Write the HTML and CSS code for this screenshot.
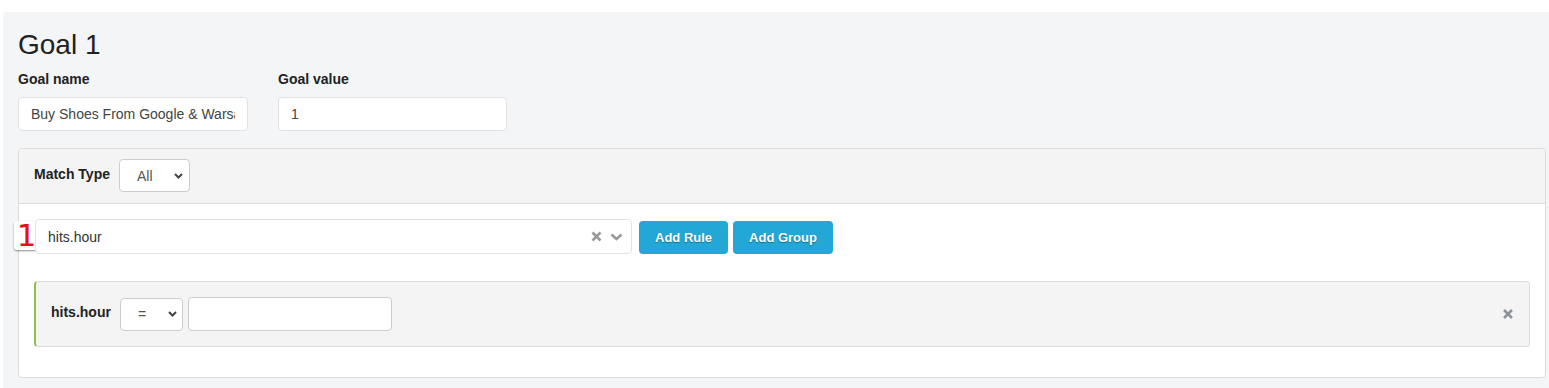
FILE: index.html
```html
<!DOCTYPE html>
<html>
    <head>
        <title>Goal editor</title>
        <link rel="stylesheet" href="styles.css">
    </head>
    <body>
        <div class="goal">
            <h1 class="goal-title">Goal 1</h1>

            <div class="goal-fields">
                <div class="field">
                    <label for="goalName">Goal name</label>
                    <input id="goalName" class="text-input name-input" type="text" value="Buy Shoes From Google &amp; Warsaw">
                </div>
                <div class="field">
                    <label for="goalValue">Goal value</label>
                    <input id="goalValue" class="text-input value-input" type="text" value="1">
                </div>
            </div>

            <div class="builder">
                <div class="builder-head">
                    <span class="head-label">Match Type</span>
                    <div class="fake-select match-select">
                        <span>All</span>
                        <svg width="9" height="6" viewBox="0 0 9 6"><polyline points="1,1 4.5,4.5 8,1" fill="none" stroke="#444" stroke-width="2"/></svg>
                    </div>
                </div>

                <div class="builder-body">
                    <div class="rule-row">
                        <span class="badge">1</span>
                        <div class="combo">
                            <span class="combo-text">hits.hour</span>
                            <svg class="combo-clear" width="11" height="11" viewBox="0 0 11 11"><path d="M1.5 1.5 L9.5 9.5 M9.5 1.5 L1.5 9.5" stroke="#999" stroke-width="2.6"/></svg>
                            <svg class="combo-arrow" width="13" height="8" viewBox="0 0 13 8"><polyline points="1.5,1.5 6.5,6 11.5,1.5" fill="none" stroke="#999" stroke-width="2.6"/></svg>
                        </div>
                        <button type="button" class="btn">Add Rule</button>
                        <button type="button" class="btn">Add Group</button>
                    </div>

                    <div class="rule">
                        <span class="rule-label">hits.hour</span>
                        <div class="fake-select op-select">
                            <span>=</span>
                            <svg width="9" height="6" viewBox="0 0 9 6"><polyline points="1,1 4.5,4.5 8,1" fill="none" stroke="#444" stroke-width="2"/></svg>
                        </div>
                        <input class="text-input rule-input" type="text" value="">
                        <svg class="rule-remove" width="12" height="12" viewBox="0 0 12 12"><path d="M2 2 L10 10 M10 2 L2 10" stroke="#8a929c" stroke-width="2.6"/></svg>
                    </div>
                </div>
            </div>
        </div>
    </body>
</html>
```

FILE: styles.css
```css
html {
    background: #fff;
}
body {
    margin: 0;
    overflow: hidden;
    font-family: "Liberation Sans", Arial, sans-serif;
    color: #333;
}
.goal {
    margin: 12px -30px 0 3px;
    padding: 15px;
    background: #f4f5f7;
    border-radius: 4px;
}
.goal-title {
    margin: 2px 0 0;
    font-size: 28px;
    line-height: 31px;
    font-weight: normal;
    color: #222;
}
.goal-fields {
    display: flex;
    gap: 30px;
    margin-top: 9px;
}
.field label {
    display: block;
    font-size: 14px;
    line-height: 20px;
    font-weight: bold;
    color: #222;
    margin-bottom: 8px;
}
.text-input {
    box-sizing: border-box;
    height: 34px;
    padding: 0 12px;
    border: 1px solid #e0e2e6;
    border-radius: 4px;
    background: #fff;
    font-family: "Liberation Sans", Arial, sans-serif;
    font-size: 14px;
    color: #444;
    outline: none;
}
.name-input {
    width: 230px;
}
.value-input {
    width: 229px;
}
.builder {
    margin: 17px 18px 0 0;
    border: 1px solid #dcdcdc;
    border-radius: 4px;
    background: #fff;
}
.builder-head {
    display: flex;
    align-items: center;
    padding: 10px 15px 11px;
    background: #f4f4f4;
    border-bottom: 1px solid #dcdcdc;
    border-radius: 4px 4px 0 0;
}
.head-label, .rule-label {
    font-size: 14px;
    line-height: 20px;
    font-weight: bold;
    color: #222;
    margin-bottom: 4px;
}
.head-label {
    margin-right: 9px;
}
.fake-select {
    box-sizing: border-box;
    display: flex;
    align-items: center;
    justify-content: space-between;
    height: 33px;
    border: 1px solid #ccc;
    border-radius: 4px;
    background: #fff;
    font-size: 14px;
    color: #555;
}
.match-select {
    width: 71px;
    padding: 0 6px 0 17px;
}
.op-select {
    width: 63px;
    padding: 0 5px 0 17px;
}
.builder-body {
    padding: 15px 15px 30px;
}
.rule-row {
    position: relative;
    display: flex;
    align-items: flex-end;
}
.badge {
    position: absolute;
    left: -20px;
    top: 2px;
    padding: 0 3px;
    background: #fff;
    border-radius: 3px;
    box-shadow: 0 1px 2px rgba(0, 0, 0, 0.45);
    font-family: "DejaVu Sans", sans-serif;
    font-size: 30px;
    line-height: 29px;
    color: #e3111b;
    -webkit-text-stroke: 0.2px #e3111b;
}
.combo {
    position: relative;
    box-sizing: border-box;
    display: flex;
    align-items: center;
    width: 597px;
    height: 35px;
    margin: 0 7px 0 1px;
    padding: 0 8px 0 12px;
    border: 1px solid #e2e2e2;
    border-radius: 4px;
    background: #fff;
    font-size: 14px;
    color: #333;
}
.combo-text {
    flex: 1;
}
.combo-clear {
    margin-right: 8px;
}
.btn {
    height: 33px;
    padding: 0 16px;
    margin-right: 5px;
    border: none;
    border-radius: 4px;
    background: #22a7d6;
    color: #fff;
    font-family: "Liberation Sans", Arial, sans-serif;
    font-size: 13px;
    font-weight: bold;
    text-shadow: 0 1px 1px rgba(0, 0, 0, 0.35);
    cursor: pointer;
}
.rule {
    display: flex;
    align-items: center;
    margin-top: 27px;
    padding: 15px;
    background: #f4f4f4;
    border: 1px solid #dcdcdc;
    border-left: 2px solid #8cc152;
    border-radius: 4px;
}
.rule-label {
    margin-right: 9px;
}
.rule-input {
    width: 204px;
    margin-left: 5px;
    border-color: #ccc;
}
.rule-remove {
    margin-left: auto;
}
```
